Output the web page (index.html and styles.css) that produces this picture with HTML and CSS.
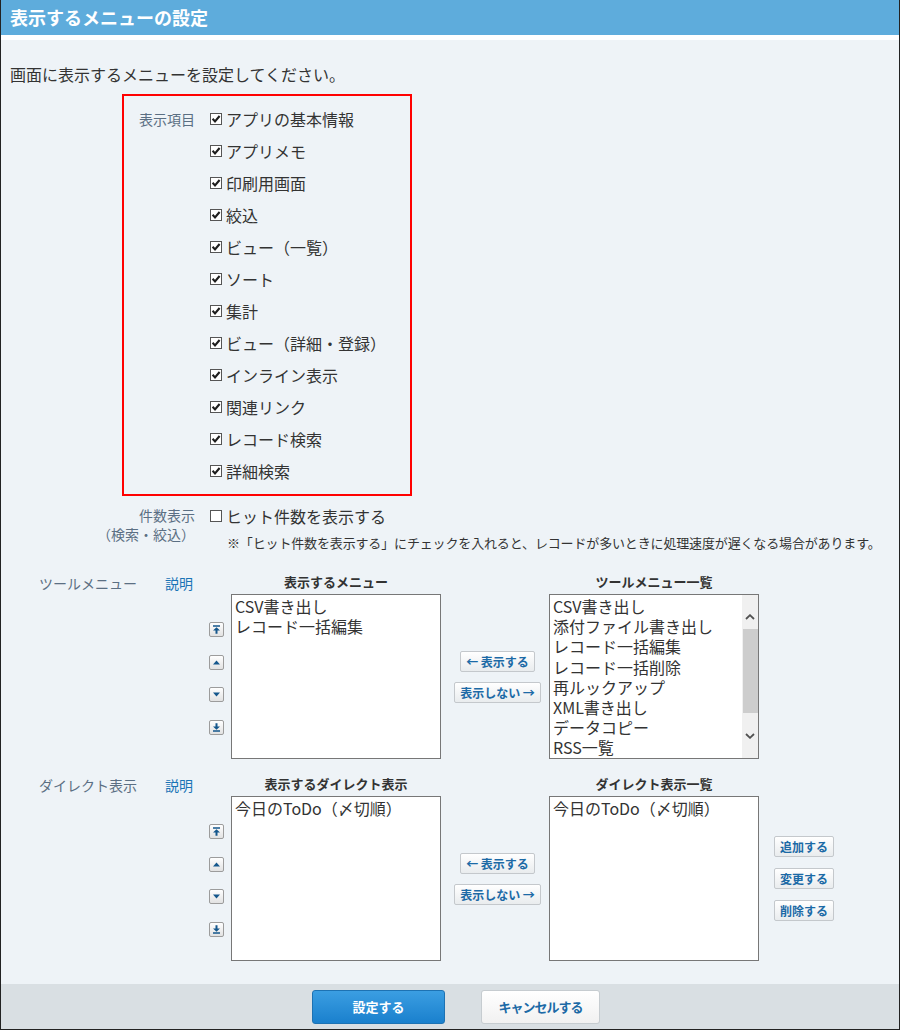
FILE: index.html
```html
<!DOCTYPE html>
<html lang="ja">
<head>
  <meta charset="UTF-8">
  <title>表示するメニューの設定</title>
  <link rel="stylesheet" href="styles.css">
</head>
<body>
  <div class="frame">
    <div class="title-bar"><h1>表示するメニューの設定</h1></div>

    <div class="content">
      <p class="intro">画面に表示するメニューを設定してください。</p>

      <div class="item-box">
        <div class="opt-label">表示項目</div>
        <ul class="check-list">
          <li><svg class="cb" viewBox="0 0 12 12"><rect x=".5" y=".5" width="11" height="11"/><path d="M2.6 5.8 5 8.4 9.6 3"/></svg>アプリの基本情報</li>
          <li><svg class="cb" viewBox="0 0 12 12"><rect x=".5" y=".5" width="11" height="11"/><path d="M2.6 5.8 5 8.4 9.6 3"/></svg>アプリメモ</li>
          <li><svg class="cb" viewBox="0 0 12 12"><rect x=".5" y=".5" width="11" height="11"/><path d="M2.6 5.8 5 8.4 9.6 3"/></svg>印刷用画面</li>
          <li><svg class="cb" viewBox="0 0 12 12"><rect x=".5" y=".5" width="11" height="11"/><path d="M2.6 5.8 5 8.4 9.6 3"/></svg>絞込</li>
          <li><svg class="cb" viewBox="0 0 12 12"><rect x=".5" y=".5" width="11" height="11"/><path d="M2.6 5.8 5 8.4 9.6 3"/></svg>ビュー（一覧）</li>
          <li><svg class="cb" viewBox="0 0 12 12"><rect x=".5" y=".5" width="11" height="11"/><path d="M2.6 5.8 5 8.4 9.6 3"/></svg>ソート</li>
          <li><svg class="cb" viewBox="0 0 12 12"><rect x=".5" y=".5" width="11" height="11"/><path d="M2.6 5.8 5 8.4 9.6 3"/></svg>集計</li>
          <li><svg class="cb" viewBox="0 0 12 12"><rect x=".5" y=".5" width="11" height="11"/><path d="M2.6 5.8 5 8.4 9.6 3"/></svg>ビュー（詳細・登録）</li>
          <li><svg class="cb" viewBox="0 0 12 12"><rect x=".5" y=".5" width="11" height="11"/><path d="M2.6 5.8 5 8.4 9.6 3"/></svg>インライン表示</li>
          <li><svg class="cb" viewBox="0 0 12 12"><rect x=".5" y=".5" width="11" height="11"/><path d="M2.6 5.8 5 8.4 9.6 3"/></svg>関連リンク</li>
          <li><svg class="cb" viewBox="0 0 12 12"><rect x=".5" y=".5" width="11" height="11"/><path d="M2.6 5.8 5 8.4 9.6 3"/></svg>レコード検索</li>
          <li><svg class="cb" viewBox="0 0 12 12"><rect x=".5" y=".5" width="11" height="11"/><path d="M2.6 5.8 5 8.4 9.6 3"/></svg>詳細検索</li>
        </ul>
      </div>

      <div class="count-row">
        <div class="count-label">件数表示<br>（検索・絞込）</div>
        <div class="count-body">
          <div class="check-line"><svg class="cb" viewBox="0 0 12 12"><rect x=".5" y=".5" width="11" height="11"/></svg>ヒット件数を表示する</div>
          <p class="note">※「ヒット件数を表示する」にチェックを入れると、レコードが多いときに処理速度が遅くなる場合があります。</p>
        </div>
      </div>

      <div class="picker">
        <div class="picker-name"><span class="picker-label">ツールメニュー</span><a class="help" href="#">説明</a></div>
        <div class="order-btns">
          <button class="order"><svg viewBox="0 0 9 9"><path d="M1 .3h7v1.4H1zM4.5 2.2 8 5.6H1zM3.5 5.6h2v3.1h-2z"/></svg></button>
          <button class="order"><svg viewBox="0 0 9 9"><path d="M4.5 2.4 8 6.4H1z"/></svg></button>
          <button class="order"><svg viewBox="0 0 9 9"><path d="M4.5 6.6 8 2.6H1z"/></svg></button>
          <button class="order"><svg viewBox="0 0 9 9"><path d="M3.5.3h2v3.1h-2zM4.5 6.8 8 3.4H1zM1 7.3h7v1.4H1z"/></svg></button>
        </div>
        <div class="list-col">
          <div class="list-head">表示するメニュー</div>
          <div class="list-box">
            <div class="list-items">
              <div>CSV書き出し</div>
              <div>レコード一括編集</div>
            </div>
          </div>
        </div>
        <div class="move-btns">
          <button class="btn-sub">← 表示する</button>
          <button class="btn-sub">表示しない →</button>
        </div>
        <div class="list-col">
          <div class="list-head">ツールメニュー一覧</div>
          <div class="list-box">
            <div class="list-items">
              <div>CSV書き出し</div>
              <div>添付ファイル書き出し</div>
              <div>レコード一括編集</div>
              <div>レコード一括削除</div>
              <div>再ルックアップ</div>
              <div>XML書き出し</div>
              <div>データコピー</div>
              <div>RSS一覧</div>
            </div>
            <div class="scrollbar">
              <div class="sb-up"><svg viewBox="0 0 10 6"><path d="M1 5 5 1.2 9 5"/></svg></div>
              <div class="sb-thumb"></div>
              <div class="sb-down"><svg viewBox="0 0 10 6"><path d="M1 1 5 4.8 9 1"/></svg></div>
            </div>
          </div>
        </div>
      </div>

      <div class="picker picker-direct">
        <div class="picker-name"><span class="picker-label">ダイレクト表示</span><a class="help" href="#">説明</a></div>
        <div class="order-btns">
          <button class="order"><svg viewBox="0 0 9 9"><path d="M1 .3h7v1.4H1zM4.5 2.2 8 5.6H1zM3.5 5.6h2v3.1h-2z"/></svg></button>
          <button class="order"><svg viewBox="0 0 9 9"><path d="M4.5 2.4 8 6.4H1z"/></svg></button>
          <button class="order"><svg viewBox="0 0 9 9"><path d="M4.5 6.6 8 2.6H1z"/></svg></button>
          <button class="order"><svg viewBox="0 0 9 9"><path d="M3.5.3h2v3.1h-2zM4.5 6.8 8 3.4H1zM1 7.3h7v1.4H1z"/></svg></button>
        </div>
        <div class="list-col">
          <div class="list-head">表示するダイレクト表示</div>
          <div class="list-box">
            <div class="list-items">
              <div>今日のToDo（〆切順）</div>
            </div>
          </div>
        </div>
        <div class="move-btns">
          <button class="btn-sub">← 表示する</button>
          <button class="btn-sub">表示しない →</button>
        </div>
        <div class="list-col">
          <div class="list-head">ダイレクト表示一覧</div>
          <div class="list-box">
            <div class="list-items">
              <div>今日のToDo（〆切順）</div>
            </div>
          </div>
        </div>
        <div class="edit-btns">
          <button class="btn-sub">追加する</button>
          <button class="btn-sub">変更する</button>
          <button class="btn-sub">削除する</button>
        </div>
      </div>
    </div>

    <div class="footer">
      <button class="btn-primary">設定する</button>
      <button class="btn-cancel">キャンセルする</button>
    </div>
  </div>
</body>
</html>
```

FILE: styles.css
```css
* { margin: 0; padding: 0; box-sizing: border-box; }

body {
  font-family: "Noto Sans CJK JP", "Noto Sans", sans-serif;
  color: #333;
  background: #fff;
}

.frame {
  width: 900px;
  height: 1030px;
  border: 1px solid #222;
  border-top: 0;
  display: flex;
  flex-direction: column;
}

.title-bar {
  height: 40px;
  background: #5eacdc;
  border-bottom: 5px solid #fff;
  padding-left: 9px;
}

.title-bar h1 {
  font-size: 18px;
  line-height: 35px;
  font-weight: bold;
  color: #fff;
}

.content {
  flex: 1;
  background: #eef3f7;
  padding-top: 24px;
}

.intro {
  font-size: 16px;
  line-height: 20px;
  padding-left: 9px;
  margin-bottom: 10px;
}

/* 表示項目 */
.item-box {
  margin-left: 121px;
  width: 290px;
  border: 2px solid #f00;
  padding: 7px 0 7px;
  display: flex;
}

.opt-label {
  width: 71px;
  text-align: right;
  font-size: 14px;
  line-height: 32px;
  color: #5b6f83;
}

.check-list {
  list-style: none;
  margin-left: 15px;
}

.check-list li,
.check-line {
  display: flex;
  align-items: center;
  font-size: 16px;
  white-space: nowrap;
}

.check-list li { height: 32px; }

.cb {
  width: 12px;
  height: 12px;
  margin-right: 4px;
  flex: none;
}

.cb rect { fill: #fff; stroke: #555; }
.cb path { fill: none; stroke: #1e1e1e; stroke-width: 2.1; }

.count-row {
  display: flex;
  margin-top: 10px;
}

.count-label {
  width: 194px;
  text-align: right;
  font-size: 14px;
  line-height: 19px;
  color: #5b6f83;
}

.count-body { margin-left: 15px; }

.check-line { height: 19px; }

.note {
  font-size: 13px;
  line-height: 16px;
  margin-top: 10px;
  padding-left: 17px;
  letter-spacing: -0.15px;
  white-space: nowrap;
}

/* ツールメニュー / ダイレクト表示 */
.picker {
  display: flex;
  align-items: flex-start;
  margin-top: 23px;
}

.picker-direct { margin-top: 17px; }

.picker-name {
  width: 208px;
  padding-left: 38px;
  display: flex;
  font-size: 14px;
  line-height: 16px;
  padding-top: 1px;
}

.picker-label {
  width: 126px;
  color: #5b6f83;
}

.help {
  color: #1a74b6;
  text-decoration: none;
}

.order-btns {
  width: 22px;
  margin-top: 48px;
  display: flex;
  flex-direction: column;
  gap: 17.5px;
}

.order {
  width: 15px;
  height: 15px;
  border: 1px solid #9c9c9c;
  border-radius: 2px;
  background: linear-gradient(#fff, #e2e2e2);
  display: flex;
  align-items: center;
  justify-content: center;
}

.order svg {
  width: 9px;
  height: 9px;
  fill: #15578c;
}

.list-col { width: 210px; }

.list-head {
  font-size: 13px;
  line-height: 16px;
  font-weight: bold;
  text-align: center;
  margin-bottom: 4px;
}

.list-box {
  height: 165px;
  border: 1px solid #777;
  background: #fff;
  display: flex;
  overflow: hidden;
}

.list-items {
  flex: 1;
  font-size: 16px;
  line-height: 20.2px;
  padding: 1px 0 0 3px;
  white-space: nowrap;
  overflow: hidden;
}

.scrollbar {
  width: 16px;
  background: #f0f0f0;
  display: flex;
  flex-direction: column;
}

.sb-up, .sb-down {
  display: flex;
  align-items: center;
  justify-content: center;
}

.sb-up { height: 34px; padding-top: 10px; }
.sb-down { flex: 1; }

.sb-up svg, .sb-down svg {
  width: 10px;
  height: 6px;
  fill: none;
  stroke: #505050;
  stroke-width: 1.8;
}

.sb-thumb {
  height: 84px;
  margin-left: 1px;
  background: #cdcdcd;
}

.move-btns, .edit-btns {
  height: 165px;
  margin-top: 20px;
  display: flex;
  flex-direction: column;
  justify-content: center;
}

.move-btns {
  width: 108px;
  padding-left: 5px;
  align-items: center;
  gap: 10px;
}

.edit-btns {
  margin-left: 15px;
  gap: 11px;
}

.btn-sub {
  height: 21px;
  padding: 0 5px;
  border: 1px solid #c4c8cc;
  border-radius: 2px;
  background: linear-gradient(#fff, #e9ecee);
  font-family: inherit;
  font-size: 12px;
  font-weight: bold;
  color: #1c6aa6;
  white-space: nowrap;
}

.footer {
  height: 45px;
  background: #d9dfe3;
  display: flex;
  align-items: center;
  padding-left: 311px;
}

.btn-primary, .btn-cancel {
  height: 34px;
  border-radius: 3px;
  font-family: inherit;
  font-size: 13px;
  font-weight: bold;
}

.btn-primary {
  width: 133px;
  border: 1px solid #1d72b3;
  background: linear-gradient(#3b9ee2, #1a80cd);
  color: #fff;
}

.btn-cancel {
  width: 119px;
  margin-left: 36px;
  border: 1px solid #c6ccd0;
  background: linear-gradient(#fff, #f1f1f1);
  color: #1c6aa6;
  letter-spacing: -1px;
}
```
